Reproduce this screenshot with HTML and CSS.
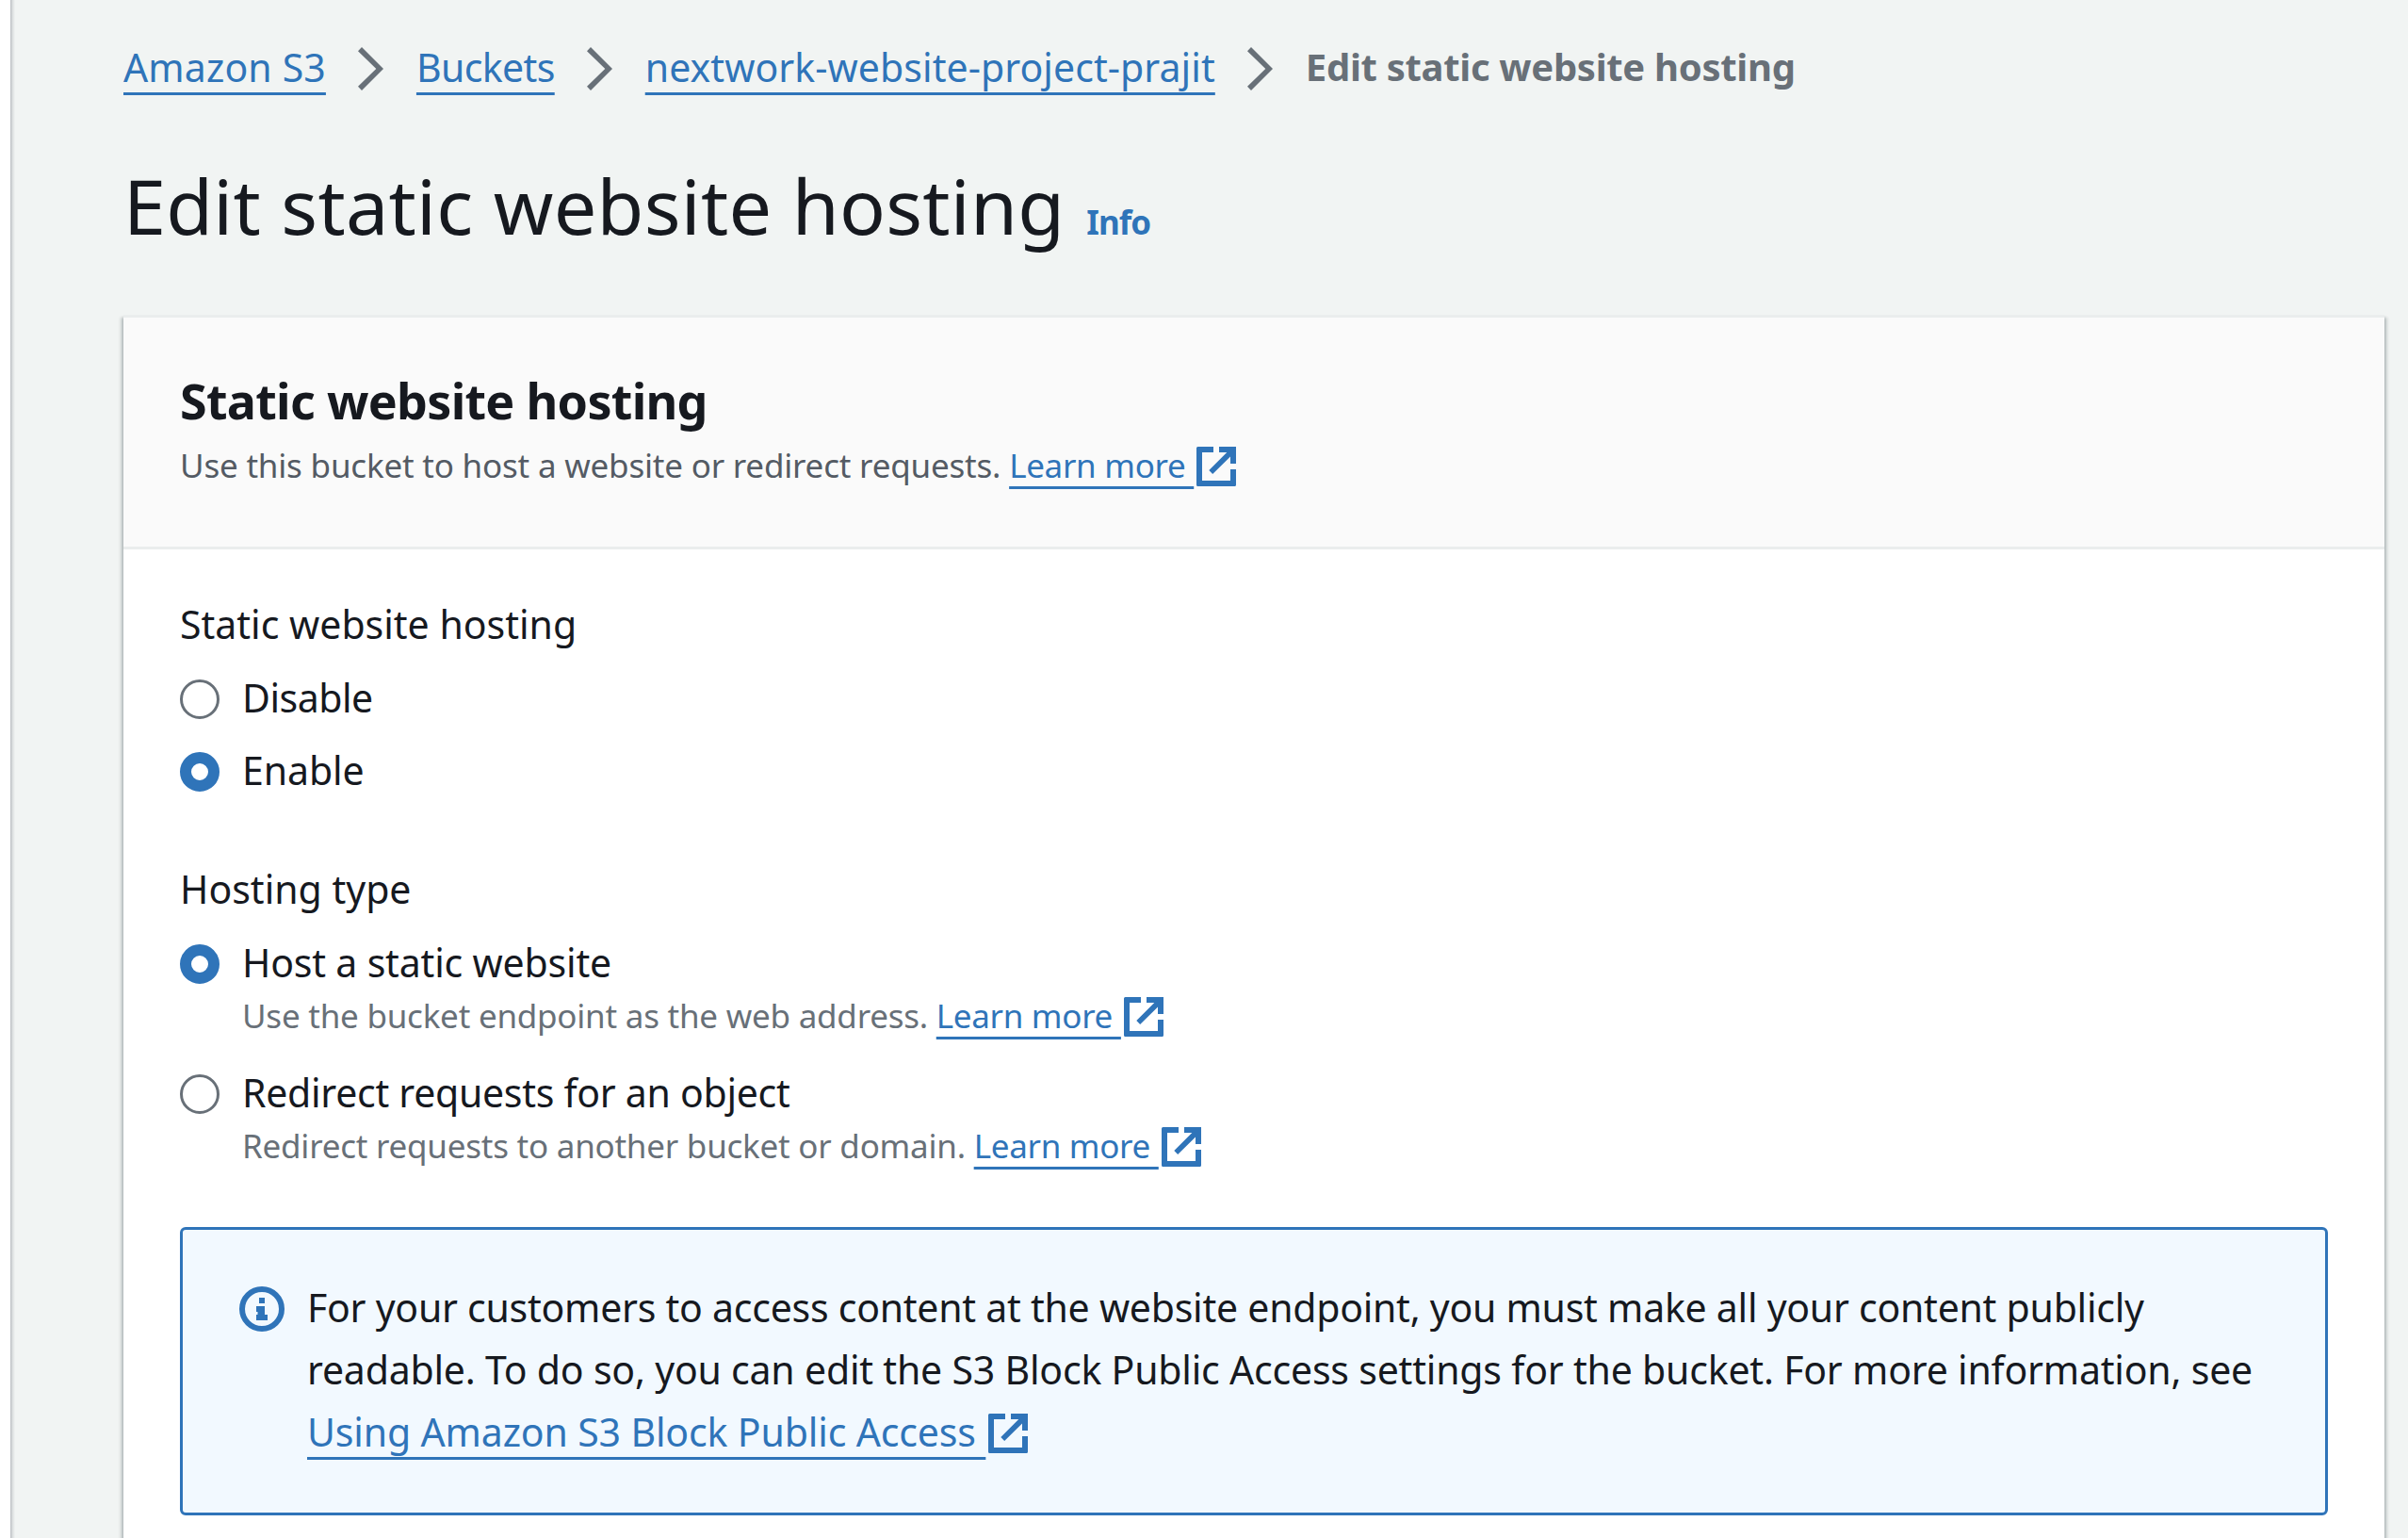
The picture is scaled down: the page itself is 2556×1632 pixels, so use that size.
FILE: index.html
```html
<!DOCTYPE html>
<html lang="en">
<head>
<meta charset="utf-8">
<title>Edit static website hosting</title>
<link rel="stylesheet" href="styles.css">
</head>
<body>
<svg class="sprite" aria-hidden="true">
  <symbol id="external" viewBox="0 0 42 42">
    <path d="M18 0H1.5Q0 0 0 1.500V40.500Q0 42 1.500 42H40.500Q42 42 42 40.500V24H36V36H6V6H18Z"/>
    <path d="M24 0H42V18H36V10.500L17.200 29L13.300 25L32.300 6H24Z"/>
  </symbol>
  <symbol id="chevron" viewBox="0 0 27 46">
    <path d="M0 4.200L4 0L27 23L4 46L0 41.800L19.300 23Z"/>
  </symbol>
</svg>
<main class="page">
  <nav class="breadcrumbs">
    <a class="link crumb-service">Amazon S3</a>
    <svg class="chevron"><use href="#chevron"/></svg>
    <a class="link crumb-buckets">Buckets</a>
    <svg class="chevron"><use href="#chevron"/></svg>
    <a class="link crumb-bucket">nextwork-website-project-prajit</a>
    <svg class="chevron"><use href="#chevron"/></svg>
    <span class="crumb-current">Edit static website hosting</span>
  </nav>
  <div class="title-row">
    <h1 class="title">Edit static website hosting</h1>
    <a class="info-link">Info</a>
  </div>
  <section class="card">
    <header class="card-header">
      <h2 class="card-title">Static website hosting</h2>
      <p class="card-description">Use this bucket to host a website or redirect requests. <a class="link">Learn more&nbsp;</a><svg class="external"><use href="#external"/></svg></p>
    </header>
    <div class="card-body">
      <div class="field">
        <div class="field-label">Static website hosting</div>
        <div class="option">
          <span class="radio"></span>
          <div class="option-label label-disable">Disable</div>
        </div>
        <div class="option option-next">
          <span class="radio checked"></span>
          <div class="option-label label-enable">Enable</div>
        </div>
      </div>
      <div class="field field-type">
        <div class="field-label">Hosting type</div>
        <div class="option">
          <span class="radio checked"></span>
          <div>
            <div class="option-label label-host">Host a static website</div>
            <p class="option-description">Use the bucket endpoint as the web address. <a class="link">Learn more&nbsp;</a><svg class="external"><use href="#external"/></svg></p>
          </div>
        </div>
        <div class="option option-spaced">
          <span class="radio"></span>
          <div>
            <div class="option-label label-redirect">Redirect requests for an object</div>
            <p class="option-description">Redirect requests to another bucket or domain. <a class="link">Learn more&nbsp;</a><svg class="external"><use href="#external"/></svg></p>
          </div>
        </div>
      </div>
      <div class="alert">
        <svg class="info-icon" viewBox="0 0 48 48">
          <circle cx="24" cy="24" r="21"/>
          <path d="M21 12H27V18H21ZM18 21H27V30H30V36H18V30H19.500V27H18Z"/>
        </svg>
        <p class="alert-text">
          <span class="alert-line line-first">For your customers to access content at the website endpoint, you must make all your content publicly</span>
          <span class="alert-line line-second">readable. To do so, you can edit the S3 Block Public Access settings for the bucket. For more information, see</span>
          <span class="alert-line line-third"><a class="link">Using Amazon S3 Block Public Access&nbsp;</a><svg class="external"><use href="#external"/></svg></span>
        </p>
      </div>
    </div>
  </section>
</main>
</body>
</html>
```
FILE: styles.css
```css
* {
  box-sizing: border-box;
}

body {
  margin: 0;
  height: 1632px;
  overflow: hidden;
  padding-left: 11px;
  background: #fff;
  color: #16191f;
  font-family: "Noto Sans", "Open Sans", sans-serif;
  font-size: 41px;
  line-height: 66px;
}

h1,
h2,
p {
  margin: 0;
}

.sprite {
  display: none;
}

.page {
  height: 1632px;
  overflow: hidden;
  padding: 38px 25px 0 120px;
  background: linear-gradient(to right, #b8bcc0 0, #d9dcdd 2px, #f1f4f3 5px);
}

.link {
  color: #2f74b9;
  text-decoration: underline;
  text-decoration-thickness: 3px;
  text-decoration-skip-ink: none;
  text-underline-offset: 11px;
}

.breadcrumbs {
  display: flex;
  align-items: center;
  height: 66px;
  white-space: nowrap;
}

.chevron {
  flex: none;
  width: 27px;
  height: 46px;
  margin: 4px 35px 0 34px;
  fill: #687078;
}

.crumb-service {
  letter-spacing: 0.15px;
}

.crumb-buckets {
  letter-spacing: -0.62px;
}

.crumb-bucket {
  letter-spacing: 0.07px;
}

.crumb-current {
  color: #687078;
  font-size: 40px;
  font-weight: 700;
  letter-spacing: -0.3px;
}

.title-row {
  display: flex;
  align-items: baseline;
  gap: 23px;
  height: 102px;
  margin-top: 63px;
  line-height: 102px;
}

.title {
  font-size: 81px;
  font-weight: 400;
  letter-spacing: 0.26px;
}

.info-link {
  color: #2f74b9;
  font-size: 35px;
  font-weight: 700;
  letter-spacing: -1px;
}

.card {
  height: 1298px;
  margin-top: 65px;
  border-top: 3px solid #eaeded;
  background: #fff;
  box-shadow: 0 3px 3px rgba(0, 28, 36, 0.3), 3px 3px 3px rgba(0, 28, 36, 0.15), -3px 3px 3px rgba(0, 28, 36, 0.15);
}

.card-header {
  padding: 55px 60px 59px;
  border-bottom: 3px solid #eaeded;
  background: #fafafa;
}

.card-title {
  font-size: 52px;
  line-height: 66px;
  letter-spacing: -0.703px;
}

.card-description,
.option-description {
  height: 54px;
  font-size: 35px;
  line-height: 54px;
  white-space: nowrap;
}

.card-description {
  margin-top: 9px;
  color: #545b64;
  letter-spacing: -0.2px;
}

.option-description {
  color: #687078;
  letter-spacing: -0.235px;
}

.card-description .link,
.option-description .link {
  letter-spacing: -0.3px;
  text-underline-offset: 9px;
}

.external {
  width: 42px;
  height: 42px;
  margin-left: 3px;
  fill: #2f74b9;
  vertical-align: -9px;
}

.card-body {
  padding: 46px 60px 0;
}

.field-type {
  margin-top: 63px;
}

.option {
  display: flex;
  gap: 24px;
  margin-top: 15px;
}

.option-next {
  margin-top: 17px;
}

.option-spaced {
  margin-top: 24px;
}

.option-label {
  line-height: 60px;
}

.label-disable {
  letter-spacing: -0.49px;
}

.label-enable {
  letter-spacing: -0.086px;
}

.label-host {
  letter-spacing: -0.184px;
}

.label-redirect {
  letter-spacing: -0.278px;
}

.radio {
  flex: none;
  width: 42px;
  height: 42px;
  margin-top: 11px;
  border: 3px solid #687078;
  border-radius: 50%;
  background: #fff;
}

.radio.checked {
  border: 12px solid #2f74b9;
}

.alert {
  display: flex;
  gap: 24px;
  width: 2280px;
  height: 306px;
  margin-top: 59px;
  padding: 49px 57px 0 60px;
  border: 3px solid #2f74b9;
  border-radius: 6px;
  background: #f2f9ff;
}

.info-icon {
  flex: none;
  width: 48px;
  height: 48px;
  margin-top: 11px;
  fill: #2f74b9;
}

.info-icon circle {
  fill: none;
  stroke: #2f74b9;
  stroke-width: 6;
}

.alert-line {
  display: block;
  height: 66px;
  white-space: nowrap;
}

.line-first {
  letter-spacing: -0.25px;
}

.line-second {
  letter-spacing: -0.2px;
}

.line-third {
  letter-spacing: -0.14px;
}

.line-third .external {
  vertical-align: -7px;
}
```
